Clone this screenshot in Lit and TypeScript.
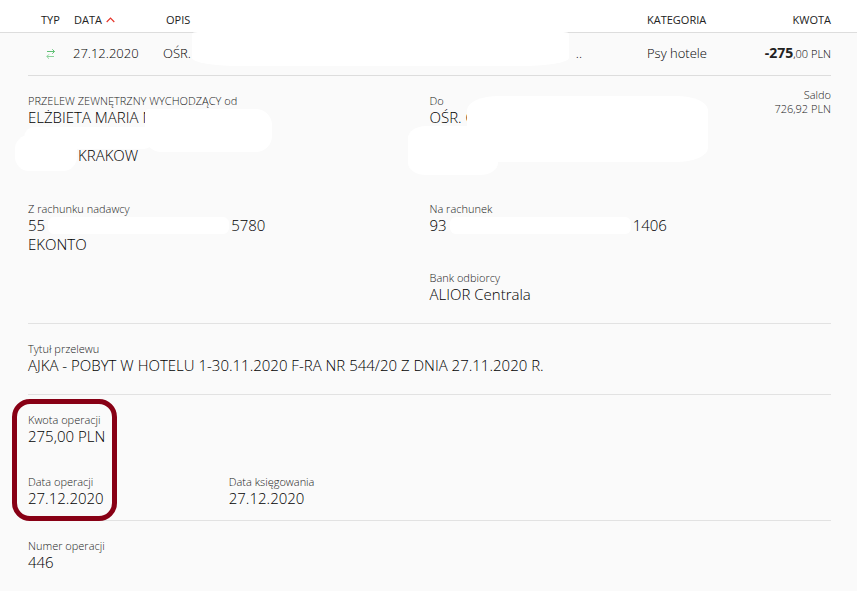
import { LitElement, html, css } from "lit";
import { customElement, property } from "lit/decorators.js";

@customElement("detail-field")
class DetailField extends LitElement {
  @property() label = "";

  static styles = css`
    :host {
      display: block;
    }
    dl {
      margin: 0;
    }
    dt {
      font-size: 11px;
      line-height: 14px;
      color: #222;
    }
    dd {
      margin: 0;
      padding-bottom: 1px;
      font-size: 15px;
      line-height: 19px;
      color: #000;
    }
  `;

  render() {
    return html`<dl>
      <dt>${this.label}</dt>
      <dd><slot></slot></dd>
    </dl>`;
  }
}

@customElement("app-root")
class AppRoot extends LitElement {
  static styles = css`
    :host {
      display: block;
      min-height: 100vh;
      background: #fafafa;
      color: #000;
      font-family: "Open Sans", "Noto Sans", sans-serif;
      font-weight: 300;
    }
    .history {
      width: 100%;
      border-collapse: separate;
      border-spacing: 0;
      table-layout: fixed;
    }
    .col-type {
      width: 73px;
    }
    .col-date {
      width: 90px;
    }
    .col-category {
      width: 110px;
    }
    .col-amount {
      width: 100px;
    }
    .history th {
      height: 25px;
      padding: 7px 0 0;
      border-bottom: 1px solid #ddd;
      background: #fff;
      color: #222;
      font-size: 11px;
      line-height: 25px;
      font-weight: 400;
      text-align: left;
      white-space: nowrap;
    }
    .history td {
      height: 42px;
      padding: 0;
      font-size: 13px;
      line-height: 40px;
      vertical-align: top;
      white-space: nowrap;
    }
    .history .type {
      padding-left: 41px;
    }
    .history td.type {
      padding-left: 45px;
    }
    .history th.description {
      padding-left: 3px;
    }
    .history .amount {
      padding-right: 26px;
      text-align: right;
    }
    .sort {
      display: inline-flex;
      align-items: center;
      gap: 4px;
      padding: 0 0 0 1px;
      border: 0;
      background: none;
      color: inherit;
      font: inherit;
      cursor: pointer;
    }
    .transfer {
      display: block;
      margin-top: 16px;
    }
    .summary {
      display: flex;
      position: relative;
    }
    .summary .ellipsis {
      margin-left: auto;
      padding-right: 65px;
    }
    .amount b {
      color: #222;
      font-size: 14px;
      font-weight: 700;
    }
    .amount .minor {
      font-size: 11px;
    }
    .details {
      margin: 0 26px 0 28px;
      border-top: 1px solid #ddd;
    }
    .section {
      border-bottom: 1px solid #e2e2e2;
    }
    .section:last-child {
      border-bottom: 0;
    }
    .parties {
      display: grid;
      grid-template-columns: 1fr 1fr;
      position: relative;
      padding: 18px 0;
    }
    .name {
      height: 108px;
    }
    .city {
      display: block;
      margin-top: 19px;
      padding-left: 50px;
    }
    .sender-account {
      height: 69px;
    }
    .account {
      display: flex;
      align-items: center;
    }
    .balance {
      position: absolute;
      top: 12px;
      right: 0;
      font-size: 11px;
      line-height: 14px;
      color: #222;
      text-align: right;
    }
    .title {
      padding: 18px 0;
    }
    .operation {
      display: grid;
      grid-template-columns: 1fr 3fr;
      row-gap: 28px;
      position: relative;
      padding: 18px 0 11px;
    }
    .amount-field {
      grid-column: 1 / -1;
    }
    .number {
      padding: 18px 0;
    }
    .highlight {
      position: absolute;
      top: 4px;
      left: -16px;
      box-sizing: border-box;
      width: 105px;
      height: 122px;
      border: 5px solid #880015;
      border-radius: 18px;
      pointer-events: none;
    }
    .mask {
      position: absolute;
      background: #fff;
    }
    .mask-description {
      top: -1px;
      left: 29px;
      width: 377px;
      height: 34px;
      border-radius: 6px 6px 50px 50px / 2px 2px 8px 8px;
    }
    .mask-sender-name {
      top: 33px;
      left: 117px;
      width: 127px;
      height: 43px;
      border-radius: 4px 16px 16px 16px;
    }
    .mask-sender-street {
      top: 51px;
      left: -4px;
      width: 130px;
      height: 22px;
      border-radius: 10px;
    }
    .mask-sender-code {
      top: 59px;
      left: -13px;
      width: 62px;
      height: 36px;
      border-radius: 14px;
    }
    .mask-receiver {
      top: 20px;
      left: 439px;
      width: 241px;
      height: 66px;
      border-radius: 32px 32px 32px 0 / 14px;
    }
    .mask-receiver-street {
      top: 50px;
      left: 380px;
      width: 90px;
      height: 49px;
      border-radius: 18px / 12px;
    }
    .mask-account {
      width: 181px;
      height: 17px;
      margin: 0 2px 0 3px;
      border-radius: 6px;
      background: #fff;
    }
  `;

  render() {
    return html`
      <table class="history">
        <colgroup>
          <col class="col-type" />
          <col class="col-date" />
          <col />
          <col class="col-category" />
          <col class="col-amount" />
        </colgroup>
        <thead>
          <tr>
            <th class="type" scope="col">TYP</th>
            <th scope="col" aria-sort="ascending">
              <button class="sort" type="button">
                DATA
                <svg width="9" height="6" viewBox="0 0 9 6" aria-hidden="true">
                  <path d="M.7 5 4.5 1.2 8.3 5" fill="none" stroke="#e5352b" stroke-width="1.2" />
                </svg>
              </button>
            </th>
            <th class="description" scope="col">OPIS</th>
            <th scope="col">KATEGORIA</th>
            <th class="amount" scope="col">KWOTA</th>
          </tr>
        </thead>
        <tbody>
          <tr>
            <td class="type">
              <svg class="transfer" width="11" height="10" viewBox="0 0 11 10" role="img" aria-label="Przelew">
                <g fill="none" stroke-width="1">
                  <path stroke="#5fc074" d="M2 2.500H9.500M7.300.300 9.500 2.500 7.300 4.700" />
                  <path stroke="#8ad29a" d="M9 7.500H1.800M4 5.300 1.800 7.500 4 9.700" />
                </g>
              </svg>
            </td>
            <td>27.12.2020</td>
            <td>
              <div class="summary">
                <span>OŚR.</span>
                <span class="ellipsis">..</span>
                <span class="mask mask-description"></span>
              </div>
            </td>
            <td>Psy hotele</td>
            <td class="amount"><b>-275</b><span class="minor">,00 PLN</span></td>
          </tr>
        </tbody>
      </table>

      <main class="details">
        <section class="section parties">
          <detail-field class="name" label="PRZELEW ZEWNĘTRZNY WYCHODZĄCY od">
            ELŻBIETA MARIA N
            <span class="city">KRAKOW</span>
          </detail-field>
          <detail-field class="name" label="Do">OŚR. O</detail-field>
          <detail-field class="sender-account" label="Z rachunku nadawcy">
            <div class="account"><span>55</span><span class="mask-account"></span><span>5780</span></div>
            EKONTO
          </detail-field>
          <detail-field class="sender-account" label="Na rachunek">
            <div class="account"><span>93</span><span class="mask-account"></span><span>1406</span></div>
          </detail-field>
          <span></span>
          <detail-field label="Bank odbiorcy">ALIOR Centrala</detail-field>
          <div class="balance">Saldo<br />726,92 PLN</div>
          <span class="mask mask-sender-name"></span>
          <span class="mask mask-sender-street"></span>
          <span class="mask mask-sender-code"></span>
          <span class="mask mask-receiver"></span>
          <span class="mask mask-receiver-street"></span>
        </section>
        <section class="section title">
          <detail-field label="Tytuł przelewu"
            >AJKA - POBYT W HOTELU 1-30.11.2020 F-RA NR 544/20 Z DNIA 27.11.2020 R.</detail-field
          >
        </section>
        <section class="section operation">
          <detail-field class="amount-field" label="Kwota operacji">275,00 PLN</detail-field>
          <detail-field label="Data operacji">27.12.2020</detail-field>
          <detail-field label="Data księgowania">27.12.2020</detail-field>
          <span class="highlight"></span>
        </section>
        <section class="section number">
          <detail-field label="Numer operacji">446</detail-field>
        </section>
      </main>
    `;
  }
}
